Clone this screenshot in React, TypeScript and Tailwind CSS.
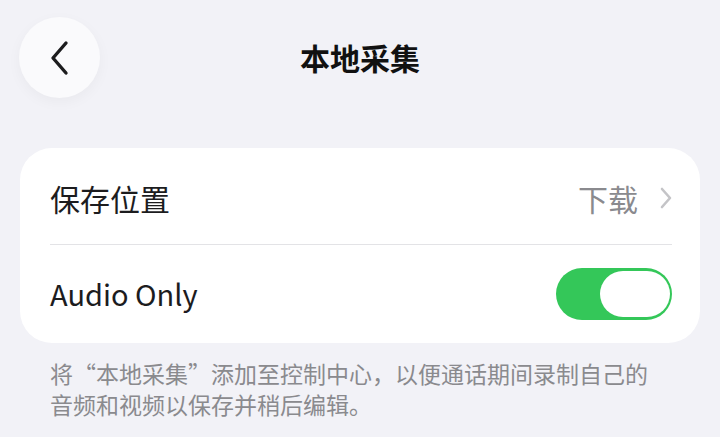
const font = "font-['Noto_Sans_CJK_SC','Noto_Sans',sans-serif]";

function Toggle() {
  return (
    <div className="flex h-[52px] w-[116px] items-center justify-end rounded-full bg-[#34c759] px-[2px]">
      <div className="h-[46px] w-[70px] rounded-full bg-white" />
    </div>
  );
}

export default function App() {
  return (
    <div className={`h-[437px] w-[720px] overflow-hidden bg-[#f2f2f7] ${font}`}>
      <div className="relative flex h-[115px] items-center justify-center">
        <button
          type="button"
          className="absolute left-[19px] top-[17px] flex h-[81px] w-[81px] items-center justify-center rounded-full bg-[#fafafc] shadow-[0_4px_14px_rgba(0,0,0,0.04)]"
        >
          <svg width="24" height="36" viewBox="0 0 24 36" fill="none">
            <path
              d="M18 3 L5 18 L18 33"
              stroke="#1c1c1e"
              strokeWidth="3.4"
              strokeLinecap="round"
              strokeLinejoin="round"
            />
          </svg>
        </button>
        <h1 className="-mt-[1px] text-[30px] font-semibold text-[#111]">本地采集</h1>
      </div>

      <div className="mx-[20px] mt-[33px] rounded-[32px] bg-white pl-[30px] pr-[28px]">
        <div className="flex h-[97px] items-center justify-between border-b border-[#e3e3e6] pt-[4px]">
          <span className="text-[30px] text-[#1c1c1e]">保存位置</span>
          <div className="flex items-center gap-[22px]">
            <span className="text-[30px] text-[#8a8a8e]">下载</span>
            <svg width="12" height="22" viewBox="0 0 12 22" fill="none">
              <path
                d="M2 2 L10 11 L2 20"
                stroke="#c4c4c7"
                strokeWidth="2.6"
                strokeLinecap="round"
                strokeLinejoin="round"
              />
            </svg>
          </div>
        </div>
        <div className="flex h-[98px] items-center justify-between">
          <span className="text-[29px] text-[#1c1c1e]">Audio Only</span>
          <Toggle />
        </div>
      </div>

      <p className="mt-[15px] pl-[50px] pr-[64px] text-[23px] leading-[31px] text-[#8a8a8e]">
        将“本地采集”添加至控制中心，以便通话期间录制自己的音频和视频以保存并稍后编辑。
      </p>
    </div>
  );
}
